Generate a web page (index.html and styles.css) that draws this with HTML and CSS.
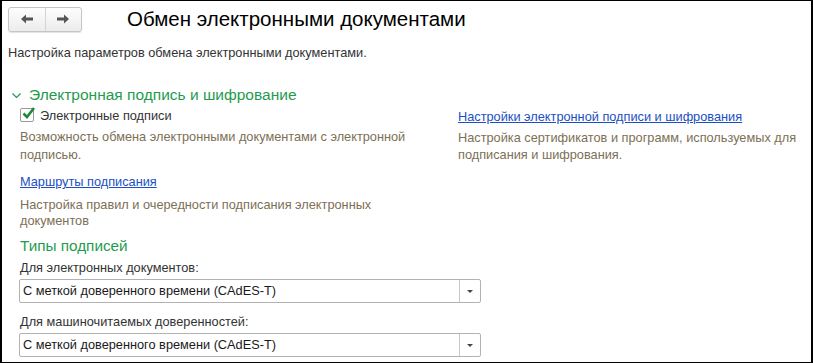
FILE: index.html
```html
<!DOCTYPE html>
<html lang="ru">
<head>
    <meta charset="UTF-8" />
    <title>Обмен электронными документами</title>
    <link rel="stylesheet" href="styles.css">
</head>
<body>
    <div class="frame">
        <div class="header">
            <div class="nav">
                <button class="nav-btn">
                    <svg width="14" height="10" viewBox="0 0 14 10"><path d="M1 5 L6 0.5 L6 3.5 L13 3.5 L13 6.5 L6 6.5 L6 9.5 Z" fill="#555"/></svg>
                </button>
                <button class="nav-btn">
                    <svg width="14" height="10" viewBox="0 0 14 10"><path d="M13 5 L8 0.5 L8 3.5 L1 3.5 L1 6.5 L8 6.5 L8 9.5 Z" fill="#555"/></svg>
                </button>
            </div>
            <h1 class="title">Обмен электронными документами</h1>
        </div>

        <p class="intro">Настройка параметров обмена электронными документами.</p>

        <div class="group-head">
            <svg class="chevron" width="9" height="6" viewBox="0 0 9 6"><path d="M0.5 0.5 L4.5 4.5 L8.5 0.5" fill="none" stroke="#1f9b4f" stroke-width="1.2"/></svg>
            <span>Электронная подпись и шифрование</span>
        </div>

        <div class="group">
            <div class="cols">
                <div class="col">
                    <label class="check">
                        <span class="box">
                            <svg width="15" height="14" viewBox="0 0 15 14"><path d="M2.5 7.5 L6 11 L13 2" fill="none" stroke="#1d8a3a" stroke-width="2.6"/></svg>
                        </span>
                        Электронные подписи
                    </label>
                    <p class="hint">Возможность обмена электронными документами с электронной подписью.</p>
                </div>
                <div class="col">
                    <a class="link" href="#">Настройки электронной подписи и шифрования</a>
                    <p class="hint right">Настройка сертификатов и программ, используемых для подписания и шифрования.</p>
                </div>
            </div>

            <div class="col narrow">
                <a class="link" href="#">Маршруты подписания</a>
                <p class="hint tight">Настройка правил и очередности подписания электронных документов</p>
            </div>

            <h2 class="sub-head">Типы подписей</h2>

            <div class="field">
                <div class="field-label">Для электронных документов:</div>
                <div class="select">
                    <span class="select-value">С меткой доверенного времени (CAdES-T)</span>
                    <span class="select-btn"><span class="tri"></span></span>
                </div>
            </div>

            <div class="field">
                <div class="field-label">Для машиночитаемых доверенностей:</div>
                <div class="select">
                    <span class="select-value">С меткой доверенного времени (CAdES-T)</span>
                    <span class="select-btn"><span class="tri"></span></span>
                </div>
            </div>
        </div>
    </div>
</body>
</html>
```

FILE: styles.css
```css
html, body {
    margin: 0;
    padding: 0;
}

body {
    font-family: "Liberation Sans", Arial, sans-serif;
    font-size: 12.75px;
    color: #333;
    background: #fff;
}

.frame {
    box-sizing: border-box;
    width: 813px;
    height: 363px;
    border: 1px solid #000;
    border-left-width: 2px;
    border-right-width: 2px;
    padding: 5px 0 0 6px;
    overflow: hidden;
}

.header {
    display: flex;
    align-items: center;
    height: 26px;
}

.nav {
    display: flex;
    width: 74px;
    height: 25px;
    box-sizing: border-box;
    border: 1px solid #c5c5c5;
    border-radius: 3px;
    background: linear-gradient(#fdfdfd, #ececec);
    box-shadow: 0 1px 1px rgba(0, 0, 0, 0.12);
}

.nav-btn {
    flex: 1;
    border: 0;
    background: none;
    padding: 0;
    display: flex;
    align-items: center;
    justify-content: center;
}

.nav-btn + .nav-btn {
    border-left: 1px solid #d4d4d4;
}

.title {
    margin: 0 0 0 45px;
    font-size: 20.5px;
    font-weight: normal;
    color: #000;
}

.intro {
    margin: 13px 0 0;
    line-height: 16px;
}

.group-head {
    display: flex;
    align-items: center;
    height: 20px;
    margin-top: 24px;
    color: #1f9b4f;
    font-size: 15.5px;
}

.chevron {
    margin: 1px 8px 0 4px;
}

.group {
    padding-left: 12px;
}

.cols {
    display: flex;
}

.col {
    width: 438px;
}

.col + .col {
    width: 345px;
}

.check {
    display: flex;
    align-items: center;
    gap: 6px;
    height: 20px;
}

.box {
    width: 12px;
    height: 12px;
    border: 1px solid #999;
    border-radius: 2px;
    position: relative;
}

.box svg {
    position: absolute;
    left: 0;
    top: -3px;
}

.hint {
    margin: 3px 0 0;
    color: #7d6f55;
    line-height: 18px;
}

.hint.right {
    margin-top: 4px;
    line-height: 17px;
}

.hint.tight {
    margin-top: 7px;
    line-height: 16px;
}

.link {
    display: inline-block;
    color: #1b4fc4;
    margin-top: 4px;
    line-height: 16px;
}

.narrow {
    width: 380px;
    margin-top: 6px;
}

.sub-head {
    margin: 7px 0 0;
    height: 20px;
    line-height: 20px;
    font-size: 15.3px;
    font-weight: normal;
    color: #1f9b4f;
}

.field-label {
    margin-top: 4px;
    line-height: 16px;
}

.field + .field .field-label {
    margin-top: 11px;
}

.select {
    display: flex;
    width: 462px;
    height: 24px;
    box-sizing: border-box;
    margin-top: 3px;
    margin-left: -1px;
    border: 1px solid #b3b3b3;
    border-radius: 2px;
    color: #1a1a1a;
}

.select-value {
    flex: 1;
    padding-left: 3px;
    line-height: 22px;
}

.select-btn {
    width: 20px;
    border-left: 1px solid #c8c8c8;
    display: flex;
    align-items: center;
    justify-content: center;
}

.tri {
    border-left: 3px solid transparent;
    border-right: 3px solid transparent;
    border-top: 3px solid #444;
}
```
